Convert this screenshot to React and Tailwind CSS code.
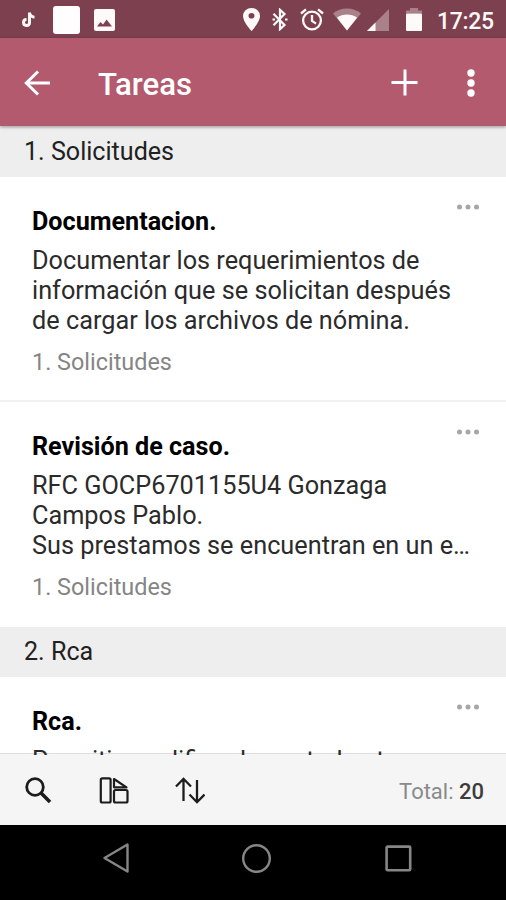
import React from 'react';

const sections = [
  {
    title: '1. Solicitudes',
    tasks: [
      {
        title: 'Documentacion.',
        lines: ['Documentar los requerimientos de', 'información que se solicitan después', 'de cargar los archivos de nómina.'],
        group: '1. Solicitudes'
      },
      {
        title: 'Revisión de caso.',
        lines: ['RFC GOCP6701155U4 Gonzaga', 'Campos Pablo.', 'Sus prestamos se encuentran en un e…'],
        group: '1. Solicitudes'
      }
    ]
  },
  {
    title: '2. Rca',
    tasks: [
      {
        title: 'Rca.',
        lines: ['Permitir modificar los estados t'],
        partial: true
      }
    ]
  }
];

const StatusBar = () => (
  <div className="h-[38px] shrink-0 bg-[#7d404e] flex items-center pl-[22px] pt-px text-[#fffafa]">
    <svg width="15" height="16" viewBox="0 0 15 16" fill="none" stroke="currentColor" strokeWidth="3">
      <path d="M7.500 0.500V10.800a3 3 0 1 1-3-3.300" />
      <path d="M7.500 1c.5 2.500 2 3.900 5 4.200" />
    </svg>
    <div className="ml-4 w-[27px] h-[28px] rounded-[3px] bg-[#fffdfd]" />
    <svg className="ml-[14px]" width="21" height="22" viewBox="0 0 21 22">
      <rect width="21" height="22" rx="2" fill="currentColor" />
      <path d="M3 17.500l3.500-4.500 2.500 2.500 3.600-5L18 17.500z" fill="#7d404e" />
    </svg>
    <svg className="ml-[128px]" width="17" height="23" viewBox="0 0 16 23" preserveAspectRatio="none" fill="currentColor">
      <path fillRule="evenodd" d="M8 0a8 8 0 0 0-8 8c0 6 8 15 8 15s8-9 8-15a8 8 0 0 0-8-8zm0 5a2.800 2.800 0 1 1 0 5.600A2.800 2.800 0 0 1 8 5z" />
    </svg>
    <svg className="ml-[12px]" width="16" height="23" viewBox="0 0 16 23" fill="none" stroke="currentColor" strokeWidth="2.200">
      <path d="M1.500 5.800l11 11.200L8 21.200V1.800l4.500 4.200-11 11.200" />
      <path d="M0.500 11.500h2.500M13 11.500h2.500" />
    </svg>
    <svg className="ml-[12px]" width="24" height="23" viewBox="0 0 24 23" fill="none" stroke="currentColor" strokeWidth="2.300">
      <circle cx="12" cy="12.500" r="8.900" />
      <path d="M12 7v6l4 2.600M1 5.500L6 1.300M23 5.500L18 1.300" />
    </svg>
    <svg className="ml-[9px]" width="28" height="23" viewBox="0 0 28 23" fill="currentColor">
      <path opacity="0.35" d="M14 22.500L0 5.500a22 22 0 0 1 28 0z" />
      <path d="M14 22.500L4 9.800a17 17 0 0 1 20 0z" />
    </svg>
    <svg className="ml-[6px]" width="22" height="22" viewBox="0 0 22 22" fill="currentColor">
      <path opacity="0.35" d="M0 22L22 0v22z" />
      <path d="M0 22l8.500-8.500V22z" />
    </svg>
    <svg className="ml-[17px]" width="16" height="23" viewBox="0 0 16 23" fill="currentColor">
      <path opacity="0.35" d="M0 5.500V2.500h4V0h8v2.500h4v3z" />
      <rect y="5.500" width="16" height="17.500" rx="1" />
    </svg>
    <span className="ml-[15px] whitespace-nowrap text-[23px] font-medium leading-none tracking-[-0.300px] pt-[3px]">17:25</span>
  </div>
);

const AppBar = () => (
  <header className="relative z-10 h-[88px] shrink-0 bg-[#b35a6e] flex items-center pl-6 pt-px text-white shadow-[0_1px_3px_rgba(0,0,0,0.4)]">
    <svg width="26" height="26" viewBox="0 0 26 26" fill="none" stroke="currentColor" strokeWidth="3">
      <path d="M26 13H2M14 1.500L2.300 13L14 24.500" />
    </svg>
    <h1 className="ml-[48px] mt-[4px] text-[31.200px] font-medium leading-none">Tareas</h1>
    <svg className="ml-auto" width="27" height="27" viewBox="0 0 27 27" fill="none" stroke="currentColor" strokeWidth="3">
      <path d="M14 0.500v26M0.500 13.500h26" />
    </svg>
    <svg className="ml-[49px] mr-[31px]" width="8" height="28" viewBox="0 0 8 28" fill="currentColor">
      <circle cx="4" cy="4" r="3.700" />
      <circle cx="4" cy="14" r="3.700" />
      <circle cx="4" cy="24" r="3.700" />
    </svg>
  </header>
);

const SectionHeader = ({ title }) => (
  <h2 className="h-[50px] shrink-0 bg-[#eeeeee] pl-6 text-[25.100px] leading-[50px] text-[#212121]">{title}</h2>
);

const TaskCard = ({ task }) => (
  <article
    className={
      task.partial
        ? 'relative h-[77px] shrink-0 bg-white px-8 pt-[29px] border-b border-[#dedede]'
        : 'relative h-[225px] shrink-0 bg-white px-8 pt-[29px] border-b-2 border-[#f0f0f0] last:border-b-0'
    }
  >
    <svg className="absolute right-[26px] top-[27px]" width="24" height="6" viewBox="0 0 24 6" fill="#a6a6a6">
      <circle cx="3.500" cy="3" r="2.500" />
      <circle cx="12" cy="3" r="2.500" />
      <circle cx="20.500" cy="3" r="2.500" />
    </svg>
    <h3 className="text-[25.150px] font-bold leading-[31px] text-black">{task.title}</h3>
    <div className="mt-[9px] text-[25.270px] leading-[30px] text-[#2b2b2b] whitespace-nowrap">
      {task.lines.map((line) => (
        <p key={line}>{line}</p>
      ))}
    </div>
    {task.group && <p className="mt-[11px] text-[23.400px] leading-[30px] text-[#858585]">{task.group}</p>}
  </article>
);

const Toolbar = () => (
  <div className="h-[70px] shrink-0 bg-[#f5f5f5] flex items-center pl-[25px] pr-[22px] text-[#1c1c1c]">
    <svg width="27" height="27" viewBox="0 0 27 27" fill="none" stroke="currentColor">
      <circle cx="10" cy="10" r="8.300" strokeWidth="2.800" />
      <path d="M15.800 15.800L25 25" strokeWidth="3.600" />
    </svg>
    <svg className="ml-[47px]" width="31" height="27" viewBox="0 0 31 27" fill="none" stroke="currentColor" strokeWidth="2.200">
      <rect x="1.800" y="1.300" width="9.800" height="24.200" rx="1.500" />
      <rect x="15" y="13" width="13.500" height="12.500" rx="1.500" />
      <path d="M15 10.300V2L27.500 10.300z" strokeLinejoin="round" />
    </svg>
    <svg className="ml-[45px]" width="30" height="27" viewBox="0 0 30 27" fill="none" stroke="currentColor" strokeWidth="2.300">
      <path d="M8.500 24V2M1 9.500L8.500 1.800l7.500 7.700M22 3v22M14.500 17.500L22 25.200l7.500-7.700" />
    </svg>
    <p className="ml-auto text-[22px] leading-none text-[#8a8a8a] pt-[3px]">
      Total: <span className="font-medium text-[#3c3c3c]">20</span>
    </p>
  </div>
);

const NavBar = () => (
  <nav className="h-[75px] shrink-0 bg-black flex items-center pl-[102px] pb-[9px] text-[#868686]">
    <svg width="28" height="30" viewBox="0 0 28 30" fill="none" stroke="currentColor" strokeWidth="2.400" strokeLinejoin="round">
      <path d="M25.500 1.500v27L2.500 15z" />
    </svg>
    <svg className="ml-[111px]" width="31" height="31" viewBox="0 0 31 31" fill="none" stroke="currentColor" strokeWidth="2.400">
      <circle cx="15.500" cy="15.500" r="13.300" />
    </svg>
    <svg className="ml-[113px]" width="27" height="27" viewBox="0 0 27 27" fill="none" stroke="currentColor" strokeWidth="2.600">
      <rect x="1.600" y="1.600" width="23.600" height="23.600" rx="1" />
    </svg>
  </nav>
);

const App = () => {
  return (
    <div className="w-full h-screen overflow-hidden flex flex-col bg-white font-['Roboto',sans-serif]">
      <StatusBar />
      <AppBar />
      <main className="flex-1 min-h-0 overflow-hidden flex flex-col pt-px bg-[#f5f5f5]">
        {sections.map((section) => (
          <section key={section.title} className="shrink-0 flex flex-col">
            <SectionHeader title={section.title} />
            {section.tasks.map((task) => (
              <TaskCard key={task.title} task={task} />
            ))}
          </section>
        ))}
      </main>
      <Toolbar />
      <NavBar />
    </div>
  );
};

export default App;
